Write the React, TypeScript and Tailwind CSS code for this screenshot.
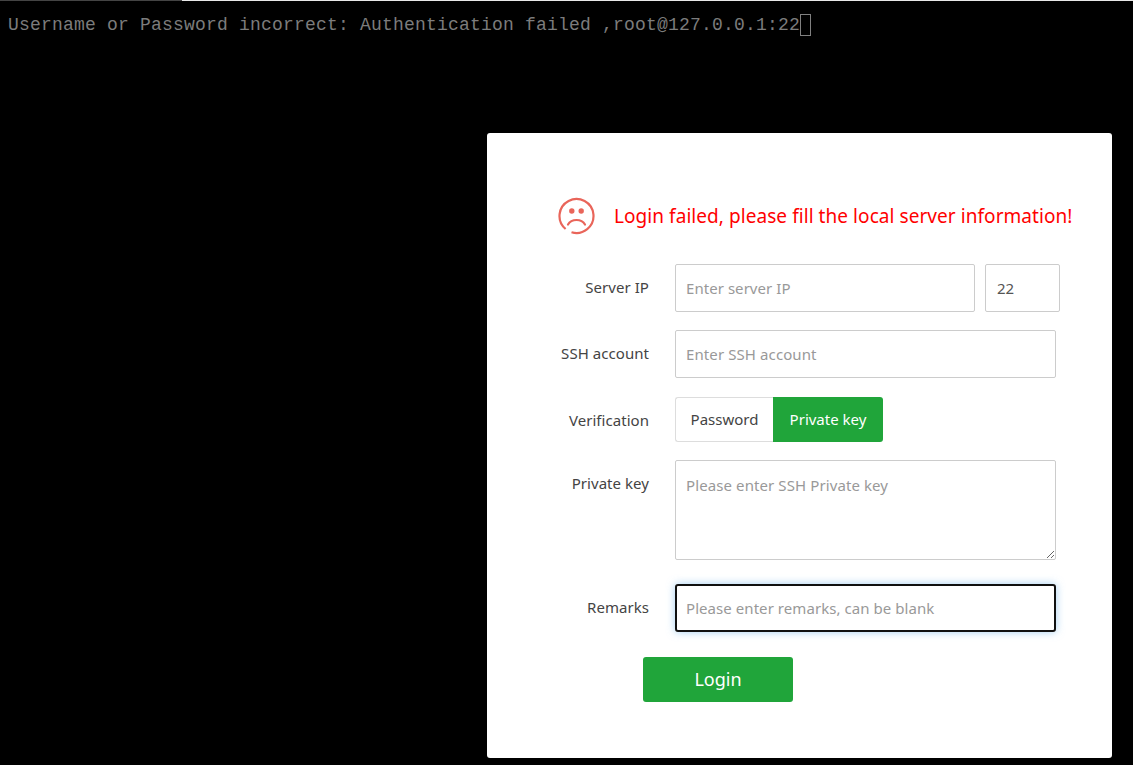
import React from "react";

function Row({ label, children, className = "" }: { label: string; children: React.ReactNode; className?: string }) {
  return (
    <div className={`flex ${className}`}>
      <label className="w-[162px] shrink-0 pt-[13px] text-right text-[15px] leading-[20px] tracking-[0.05px] text-[#444]">{label}</label>
      <div className="ml-[26px] flex gap-[10px]">{children}</div>
    </div>
  );
}

export default function App() {
  return (
    <div className="relative h-[765px] w-[1133px] overflow-hidden bg-black font-['Noto_Sans','Open_Sans',sans-serif]">
      <div className="flex h-px w-full bg-[#e8e8e8]">
        <div className="h-px w-[182px] bg-[#444]" />
      </div>
      <div className="flex items-start pl-2 pt-[14px] font-['Liberation_Mono',monospace] text-[18px] leading-[21px] tracking-[0.2px] text-[#7c7c7c]">
        <span className="whitespace-pre">Username or Password incorrect: Authentication failed ,root@127.0.0.1:22</span>
        <span className="-mt-px h-[22px] w-[11px] border border-[#808080]" />
      </div>
      <div className="absolute left-[487px] top-[133px] h-[625px] w-[625px] rounded-[3px] bg-white">
        <div className="ml-[71px] mt-[64px] flex h-[38px] items-center">
          <svg width="38" height="38" viewBox="0 0 38 38" fill="none">
            <path d="M7.6 32A17 17 0 1 1 13.5 35.2" stroke="#e9655a" strokeWidth="2.2" />
            <circle cx="13.8" cy="14" r="2.7" fill="#e9655a" />
            <circle cx="23.2" cy="14" r="2.7" fill="#e9655a" />
            <path d="M10 27.5c2-3.4 5-4.500 8.500-4.500s6.500 1.100 8.500 4.500" stroke="#e9655a" strokeWidth="2.2" strokeLinecap="round" />
          </svg>
          <span className="ml-[18px] whitespace-nowrap text-[19px] leading-[24px] tracking-[0.06px] text-[#ff0000]">Login failed, please fill the local server information!</span>
        </div>
        <div className="mt-[29px] flex flex-col">
          <Row label="Server IP">
            <input placeholder="Enter server IP" className="h-[48px] w-[300px] rounded-[2px] border border-[#ccc] px-[10px] text-[15px] tracking-[0.05px] text-[#555] outline-none placeholder:text-[#999]" />
            <input defaultValue="22" className="h-[48px] w-[75px] rounded-[2px] border border-[#ccc] px-[11px] text-[15px] text-[#555] outline-none" />
          </Row>
          <Row label="SSH account" className="mt-[18px]">
            <input placeholder="Enter SSH account" className="h-[48px] w-[381px] rounded-[2px] border border-[#ccc] px-[10px] text-[15px] tracking-[0.1px] text-[#555] outline-none placeholder:text-[#999]" />
          </Row>
          <Row label="Verification" className="mt-[19px]">
            <div className="flex h-[45px] text-[15px]">
              <button className="h-full w-[98px] rounded-l-[3px] border border-r-0 border-[#ddd] bg-white text-[#444]">Password</button>
              <button className="h-full w-[110px] rounded-r-[3px] bg-[#20a53a] text-white">Private key</button>
            </div>
          </Row>
          <Row label="Private key" className="mt-[18px]">
            <textarea placeholder="Please enter SSH Private key" className="block h-[100px] w-[381px] rounded-[2px] border border-[#ccc] px-[10px] pt-[14px] text-[15px] leading-[20px] tracking-[0.1px] text-[#555] outline-none placeholder:text-[#999]" />
          </Row>
          <Row label="Remarks" className="mt-[24px]">
            <input placeholder="Please enter remarks, can be blank" className="h-[48px] w-[381px] rounded-[3px] border-2 border-[#101010] px-[9px] text-[15px] tracking-[0.06px] text-[#555] shadow-[0_0_8px_rgba(102,175,233,0.6)] outline-none placeholder:text-[#999]" />
          </Row>
          <div className="ml-[156px] mt-[25px]">
            <button className="h-[45px] w-[150px] rounded-[3px] bg-[#20a53a] text-[18px] text-white">Login</button>
          </div>
        </div>
      </div>
    </div>
  );
}
